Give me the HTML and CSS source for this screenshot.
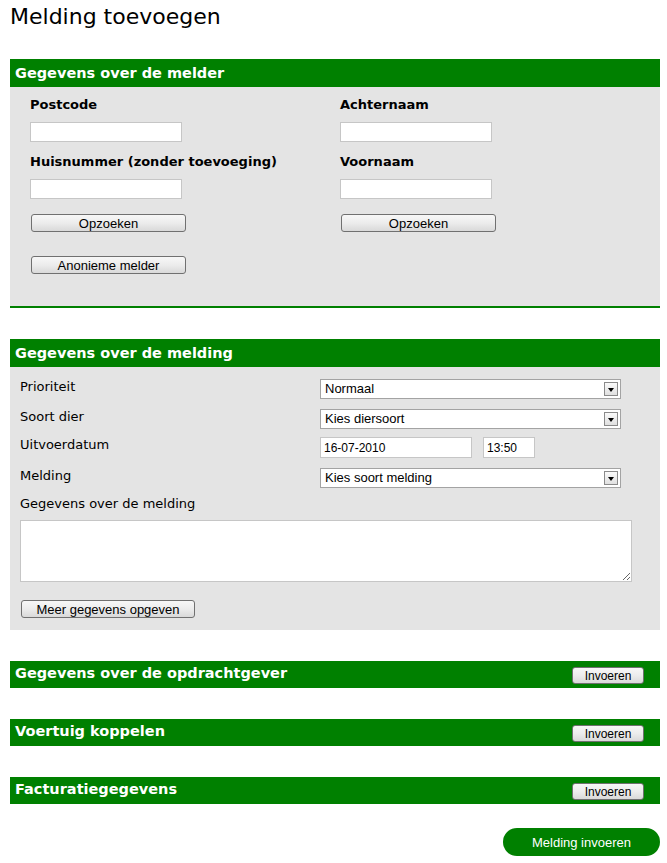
FILE: index.html
```html
<!DOCTYPE html>
<html lang="nl">
<head>
<meta charset="utf-8">
<title>Melding toevoegen</title>
<link rel="stylesheet" href="styles.css">
</head>
<body>
<h1 class="title">Melding toevoegen</h1>

<section class="panel panel-bordered">
  <h2 class="panel-head">Gegevens over de melder</h2>
  <div class="panel-body melder">
    <div class="col">
      <label class="flabel">Postcode</label>
      <input class="txt txt-md" type="text">
      <label class="flabel">Huisnummer (zonder toevoeging)</label>
      <input class="txt txt-md" type="text">
      <button class="btn btn-wide" type="button">Opzoeken</button>
      <button class="btn btn-wide btn-anon" type="button">Anonieme melder</button>
    </div>
    <div class="col">
      <label class="flabel">Achternaam</label>
      <input class="txt txt-md" type="text">
      <label class="flabel">Voornaam</label>
      <input class="txt txt-md" type="text">
      <button class="btn btn-wide" type="button">Opzoeken</button>
    </div>
  </div>
</section>

<section class="panel">
  <h2 class="panel-head">Gegevens over de melding</h2>
  <div class="panel-body melding">
    <div class="frow frow-1">
      <span class="rlabel">Prioriteit</span>
      <div class="sel"><span class="sel-val">Normaal</span><span class="sel-arrow"></span></div>
    </div>
    <div class="frow frow-2">
      <span class="rlabel">Soort dier</span>
      <div class="sel"><span class="sel-val">Kies diersoort</span><span class="sel-arrow"></span></div>
    </div>
    <div class="frow frow-3">
      <span class="rlabel">Uitvoerdatum</span>
      <div class="dt">
        <input class="txt txt-date" type="text" value="16-07-2010">
        <input class="txt txt-time" type="text" value="13:50">
      </div>
    </div>
    <div class="frow frow-4">
      <span class="rlabel">Melding</span>
      <div class="sel"><span class="sel-val">Kies soort melding</span><span class="sel-arrow"></span></div>
    </div>
    <div class="rlabel blabel">Gegevens over de melding</div>
    <textarea class="area"></textarea>
    <button class="btn btn-more" type="button">Meer gegevens opgeven</button>
  </div>
</section>

<section class="panel panel-short">
  <div class="panel-head head-row">
    <h2 class="head-title">Gegevens over de opdrachtgever</h2>
    <button class="btn btn-small" type="button">Invoeren</button>
  </div>
</section>

<section class="panel panel-short">
  <div class="panel-head head-row">
    <h2 class="head-title">Voertuig koppelen</h2>
    <button class="btn btn-small" type="button">Invoeren</button>
  </div>
</section>

<section class="panel panel-short">
  <div class="panel-head head-row">
    <h2 class="head-title">Facturatiegegevens</h2>
    <button class="btn btn-small" type="button">Invoeren</button>
  </div>
</section>

<div class="submit-row">
  <button class="btn-submit" type="button">Melding invoeren</button>
</div>
</body>
</html>
```

FILE: styles.css
```css
* { box-sizing: border-box; }

body {
  margin: 0 7px 0 10px;
  font-family: "DejaVu Sans", Verdana, sans-serif;
  color: #000;
  background: #fff;
}

.title {
  margin: 0 0 29px 0;
  padding-top: 4px;
  font-size: 22px;
  line-height: 26px;
  font-weight: normal;
}

.panel {
  margin-bottom: 31px;
}

.panel-bordered {
  border-bottom: 2px solid #008000;
}

.panel-head {
  margin: 0;
  height: 28px;
  background: #008000;
  color: #fff;
  font-size: 14.5px;
  font-weight: bold;
  line-height: 28px;
  padding: 0 5px;
}

.panel-short .panel-head {
  height: 27px;
}

.head-row {
  display: flex;
  justify-content: space-between;
  align-items: flex-start;
  padding-right: 16px;
}

.head-title {
  margin: 0;
  font-size: 14.5px;
  font-weight: bold;
  line-height: 24px;
}

.panel-body {
  background: #e4e4e4;
}

.melder {
  display: grid;
  grid-template-columns: 310px 1fr;
  padding: 9px 20px 32px 20px;
}

.col {
  display: flex;
  flex-direction: column;
  align-items: flex-start;
}

.flabel {
  display: block;
  font-size: 13px;
  font-weight: bold;
  line-height: 18px;
  margin-bottom: 8px;
}

.txt {
  height: 20px;
  border: 1px solid #c6c6c6;
  background: #fff;
  font-family: "Liberation Sans", Arial, sans-serif;
  font-size: 12px;
  padding: 0 3px;
  color: #000;
}

.txt-md {
  width: 152px;
  margin-bottom: 11px;
}

.btn {
  font-family: "Liberation Sans", Arial, sans-serif;
  font-size: 13px;
  color: #000;
  height: 18px;
  padding: 0 6px;
  line-height: 15px;
  border: 1px solid #707070;
  border-radius: 3px;
  background: linear-gradient(#f7f7f7 0%, #ececec 50%, #d9d9d9 100%);
}

.btn-wide {
  width: 155px;
  margin: 4px 0 0 1px;
}

.btn-anon {
  margin-top: 24px;
}

.melding {
  padding: 12px 10px 12px 10px;
}

.frow {
  display: grid;
  grid-template-columns: 300px 1fr;
  height: 20px;
}

.frow-1 { margin-bottom: 10px; }
.frow-2 { margin-bottom: 8px; }
.frow-3 { height: 21px; margin-bottom: 10px; }
.frow-4 { margin-bottom: 8px; }

.rlabel {
  font-size: 13px;
  line-height: 16px;
  display: block;
}

.sel {
  position: relative;
  width: 301px;
  height: 20px;
  border: 1px solid #a3a3a3;
  background: #fff;
  font-family: "Liberation Sans", Arial, sans-serif;
  font-size: 13px;
  line-height: 18px;
  padding-left: 4px;
}

.sel-arrow {
  position: absolute;
  top: 2px;
  right: 2px;
  width: 14px;
  height: 14px;
  border: 1px solid #8a8a8a;
  background: linear-gradient(#fafafa, #e0e0e0);
}

.sel-arrow::after {
  content: "";
  position: absolute;
  left: 3px;
  top: 5px;
  border-left: 3.5px solid transparent;
  border-right: 3.5px solid transparent;
  border-top: 4px solid #000;
}

.dt {
  display: flex;
  gap: 11px;
}

.txt-date {
  width: 152px;
  height: 21px;
}

.txt-time {
  width: 52px;
  height: 21px;
}

.blabel {
  margin-bottom: 8px;
}

.area {
  display: block;
  width: 612px;
  height: 62px;
  border: 1px solid #c6c6c6;
  background: #fff;
  resize: both;
  margin: 0 0 18px 0;
}

.btn-more {
  display: block;
  width: 174px;
  margin-left: 1px;
}

.btn-small {
  width: 72px;
  height: 17px;
  margin-top: 6px;
  padding: 0;
  font-size: 12px;
  line-height: 14px;
}

.submit-row {
  display: flex;
  justify-content: flex-end;
  margin-top: -7px;
}

.btn-submit {
  width: 157px;
  height: 28px;
  border: none;
  border-radius: 14px;
  background: #008000;
  color: #fff;
  font-family: "Liberation Sans", Arial, sans-serif;
  font-size: 13px;
  padding: 0;
}
```
